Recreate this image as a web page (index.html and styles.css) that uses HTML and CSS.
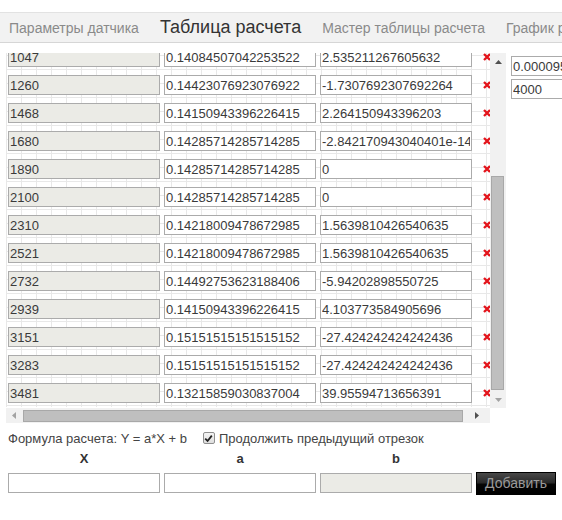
FILE: index.html
```html
<!DOCTYPE html>
<html lang="ru">
<head>
<meta charset="utf-8">
<title>Таблица расчета</title>
<link rel="stylesheet" href="styles.css">
</head>
<body>
<div class="tabs">
  <span class="tab">Параметры датчика</span>
  <span class="tab active">Таблица расчета</span>
  <span class="tab">Мастер таблицы расчета</span>
  <span class="tab">График расчета</span>
</div>

<div class="main">
  <div class="table-box">
    <div class="upper">
      <div class="viewport">
        <div class="rows">
          <div class="row"><input class="inp ro" value="1047" readonly><input class="inp" value="0.14084507042253522"><input class="inp" value="2.535211267605632"><span class="del"><svg viewBox="0 0 8 8" width="8" height="8"><path d="M1 1L7 7M7 1L1 7"/></svg></span></div>
          <div class="row"><input class="inp ro" value="1260" readonly><input class="inp" value="0.14423076923076922"><input class="inp" value="-1.7307692307692264"><span class="del"><svg viewBox="0 0 8 8" width="8" height="8"><path d="M1 1L7 7M7 1L1 7"/></svg></span></div>
          <div class="row"><input class="inp ro" value="1468" readonly><input class="inp" value="0.14150943396226415"><input class="inp" value="2.264150943396203"><span class="del"><svg viewBox="0 0 8 8" width="8" height="8"><path d="M1 1L7 7M7 1L1 7"/></svg></span></div>
          <div class="row"><input class="inp ro" value="1680" readonly><input class="inp" value="0.14285714285714285"><input class="inp" value="-2.842170943040401e-14"><span class="del"><svg viewBox="0 0 8 8" width="8" height="8"><path d="M1 1L7 7M7 1L1 7"/></svg></span></div>
          <div class="row"><input class="inp ro" value="1890" readonly><input class="inp" value="0.14285714285714285"><input class="inp" value="0"><span class="del"><svg viewBox="0 0 8 8" width="8" height="8"><path d="M1 1L7 7M7 1L1 7"/></svg></span></div>
          <div class="row"><input class="inp ro" value="2100" readonly><input class="inp" value="0.14285714285714285"><input class="inp" value="0"><span class="del"><svg viewBox="0 0 8 8" width="8" height="8"><path d="M1 1L7 7M7 1L1 7"/></svg></span></div>
          <div class="row"><input class="inp ro" value="2310" readonly><input class="inp" value="0.14218009478672985"><input class="inp" value="1.5639810426540635"><span class="del"><svg viewBox="0 0 8 8" width="8" height="8"><path d="M1 1L7 7M7 1L1 7"/></svg></span></div>
          <div class="row"><input class="inp ro" value="2521" readonly><input class="inp" value="0.14218009478672985"><input class="inp" value="1.5639810426540635"><span class="del"><svg viewBox="0 0 8 8" width="8" height="8"><path d="M1 1L7 7M7 1L1 7"/></svg></span></div>
          <div class="row"><input class="inp ro" value="2732" readonly><input class="inp" value="0.14492753623188406"><input class="inp" value="-5.94202898550725"><span class="del"><svg viewBox="0 0 8 8" width="8" height="8"><path d="M1 1L7 7M7 1L1 7"/></svg></span></div>
          <div class="row"><input class="inp ro" value="2939" readonly><input class="inp" value="0.14150943396226415"><input class="inp" value="4.103773584905696"><span class="del"><svg viewBox="0 0 8 8" width="8" height="8"><path d="M1 1L7 7M7 1L1 7"/></svg></span></div>
          <div class="row"><input class="inp ro" value="3151" readonly><input class="inp" value="0.15151515151515152"><input class="inp" value="-27.424242424242436"><span class="del"><svg viewBox="0 0 8 8" width="8" height="8"><path d="M1 1L7 7M7 1L1 7"/></svg></span></div>
          <div class="row"><input class="inp ro" value="3283" readonly><input class="inp" value="0.15151515151515152"><input class="inp" value="-27.424242424242436"><span class="del"><svg viewBox="0 0 8 8" width="8" height="8"><path d="M1 1L7 7M7 1L1 7"/></svg></span></div>
          <div class="row"><input class="inp ro" value="3481" readonly><input class="inp" value="0.13215859030837004"><input class="inp" value="39.95594713656391"><span class="del"><svg viewBox="0 0 8 8" width="8" height="8"><path d="M1 1L7 7M7 1L1 7"/></svg></span></div>
        </div>
      </div>
      <div class="vscroll">
        <div class="sbtn"><svg viewBox="0 0 7 4" width="7" height="4"><path class="arr dark" d="M0 4L3.5 0L7 4Z"/></svg></div>
        <div class="vtrack"><div class="vthumb"></div></div>
        <div class="sbtn"><svg viewBox="0 0 7 4" width="7" height="4"><path class="arr light" d="M0 0L7 0L3.5 4Z"/></svg></div>
      </div>
    </div>
    <div class="lower">
      <div class="hscroll">
        <div class="hbtn"><svg viewBox="0 0 4 7" width="4" height="7"><path class="arr light" d="M4 0L0 3.5L4 7Z"/></svg></div>
        <div class="htrack"><div class="hthumb"></div></div>
        <div class="hbtn wide"><svg viewBox="0 0 4 7" width="4" height="7"><path class="arr dark" d="M0 0L4 3.5L0 7Z"/></svg></div>
      </div>
      <div class="corner"></div>
    </div>
  </div>
  <div class="side">
    <input class="inp side-inp" value="0.0000952">
    <input class="inp side-inp" value="4000">
  </div>
</div>

<div class="formula">
  <span>Формула расчета: Y = a*X + b</span>
  <label class="chk"><span class="box"><svg viewBox="0 0 9 9" width="9" height="9"><path d="M1.2 4.6L3.6 7L7.8 1.6"/></svg></span>Продолжить предыдущий отрезок</label>
</div>

<div class="add-head">
  <span class="col">X</span>
  <span class="col">a</span>
  <span class="col">b</span>
</div>
<div class="add-row">
  <input class="inp" value="">
  <input class="inp" value="">
  <input class="inp ro" value="" readonly>
  <button class="add-btn">Добавить</button>
</div>
</body>
</html>
```

FILE: styles.css
```css
html, body {
  margin: 0;
  padding: 0;
  background: #fff;
}
body {
  width: 562px;
  height: 520px;
  overflow: hidden;
  font-family: "Liberation Sans", Arial, sans-serif;
  color: #333;
}

.tabs {
  margin-top: 12px;
  height: 29px;
  background: #f2f2f2;
  border-top: 1px solid #e2e2e2;
  border-bottom: 1px solid #d6d6d6;
  white-space: nowrap;
  overflow: hidden;
  display: flex;
  align-items: center;
  gap: 21px;
  padding-left: 9px;
}
.tab {
  font-size: 14px;
  color: #8a8a8a;
  flex: none;
}
.tab.active {
  font-size: 18px;
  color: #333;
}

.main {
  display: flex;
  align-items: flex-start;
  margin-top: 10px;
}
.table-box {
  margin-left: 6px;
  width: 500px;
  display: flex;
  flex-direction: column;
  flex: none;
}
.upper {
  display: flex;
  height: 355px;
}
.viewport {
  width: 484px;
  height: 355px;
  overflow: hidden;
}
.rows {
  margin-top: -10px;
  padding-left: 2px;
  background-color: #fff;
  background-image:
    linear-gradient(to right, #e8e8e8 1px, transparent 1px),
    linear-gradient(to bottom, #e8e8e8 1px, transparent 1px);
  background-size: 15px 14px;
  background-position: 0 0, 0 12px;
}
.row {
  height: 28px;
  display: flex;
  align-items: center;
  gap: 4px;
}

.inp {
  box-sizing: border-box;
  width: 152px;
  height: 20px;
  margin: 0;
  padding: 0 1px;
  border: 1px solid #ababab;
  border-radius: 0;
  background: #fff;
  font-family: "Liberation Sans", Arial, sans-serif;
  font-size: 13px;
  color: #3a3a3a;
  outline: none;
  flex: none;
}
.inp.ro {
  background: #ebebe6;
}

.del {
  margin-left: 7px;
  width: 8px;
  height: 8px;
  display: flex;
}
.del svg path {
  stroke: #e3141b;
  stroke-width: 2.3;
  fill: none;
}

.vscroll {
  width: 16px;
  background: #f1f1f1;
  display: flex;
  flex-direction: column;
}
.sbtn {
  height: 17px;
  display: flex;
  align-items: center;
  justify-content: center;
}
.vtrack {
  flex: 1;
  display: flex;
  flex-direction: column;
  justify-content: flex-end;
  padding: 0 2px 0 1px;
}
.vthumb {
  height: 214px;
  margin-bottom: 1px;
  background: #bfbfbf;
  border: 1px solid #a8a8a8;
  box-sizing: border-box;
}

.lower {
  display: flex;
  height: 15px;
}
.hscroll {
  width: 484px;
  background: #f1f1f1;
  display: flex;
}
.hbtn {
  width: 16px;
  display: flex;
  align-items: center;
  justify-content: center;
}
.hbtn.wide {
  width: 27px;
}
.htrack {
  flex: 1;
  display: flex;
  align-items: center;
  padding-left: 1px;
}
.hthumb {
  width: 440px;
  height: 12px;
  background: #bfbfbf;
  border: 1px solid #a8a8a8;
  box-sizing: border-box;
}
.corner {
  width: 16px;
  background: #fff;
}
.arr.dark { fill: #505050; }
.arr.light { fill: #a3a3a3; }

.side {
  margin-left: 5px;
  margin-top: 3px;
  display: flex;
  flex-direction: column;
  gap: 3px;
}
.side-inp {
  width: 100px;
}

.formula {
  margin-top: 7px;
  padding-left: 8px;
  height: 16px;
  display: flex;
  align-items: center;
  font-size: 13px;
  color: #444;
}
.chk {
  margin-left: 16px;
  display: flex;
  align-items: center;
  gap: 4px;
}
.box {
  box-sizing: border-box;
  width: 12px;
  height: 12px;
  border: 1px solid #8f8f8f;
  border-radius: 2px;
  background: linear-gradient(#f4f4f4, #dedede);
  display: flex;
  align-items: center;
  justify-content: center;
}
.box svg path {
  stroke: #222;
  stroke-width: 1.8;
  fill: none;
}

.add-head {
  margin-top: 5px;
  padding-left: 8px;
  display: flex;
  gap: 4px;
  height: 16px;
  line-height: 16px;
}
.col {
  width: 152px;
  text-align: center;
  font-size: 13px;
  font-weight: bold;
  color: #333;
}

.add-row {
  margin-top: 4px;
  padding-left: 8px;
  display: flex;
  align-items: center;
  gap: 4px;
  height: 24px;
}
.add-btn {
  box-sizing: border-box;
  width: 80px;
  height: 23px;
  margin: 0;
  padding: 0;
  border: 1px solid #000;
  border-radius: 0;
  background: linear-gradient(#484848 0%, #2a2a2a 45%, #050505 55%, #000 100%);
  color: #9a9a9a;
  font-family: "Liberation Sans", Arial, sans-serif;
  font-size: 14px;
}
```
